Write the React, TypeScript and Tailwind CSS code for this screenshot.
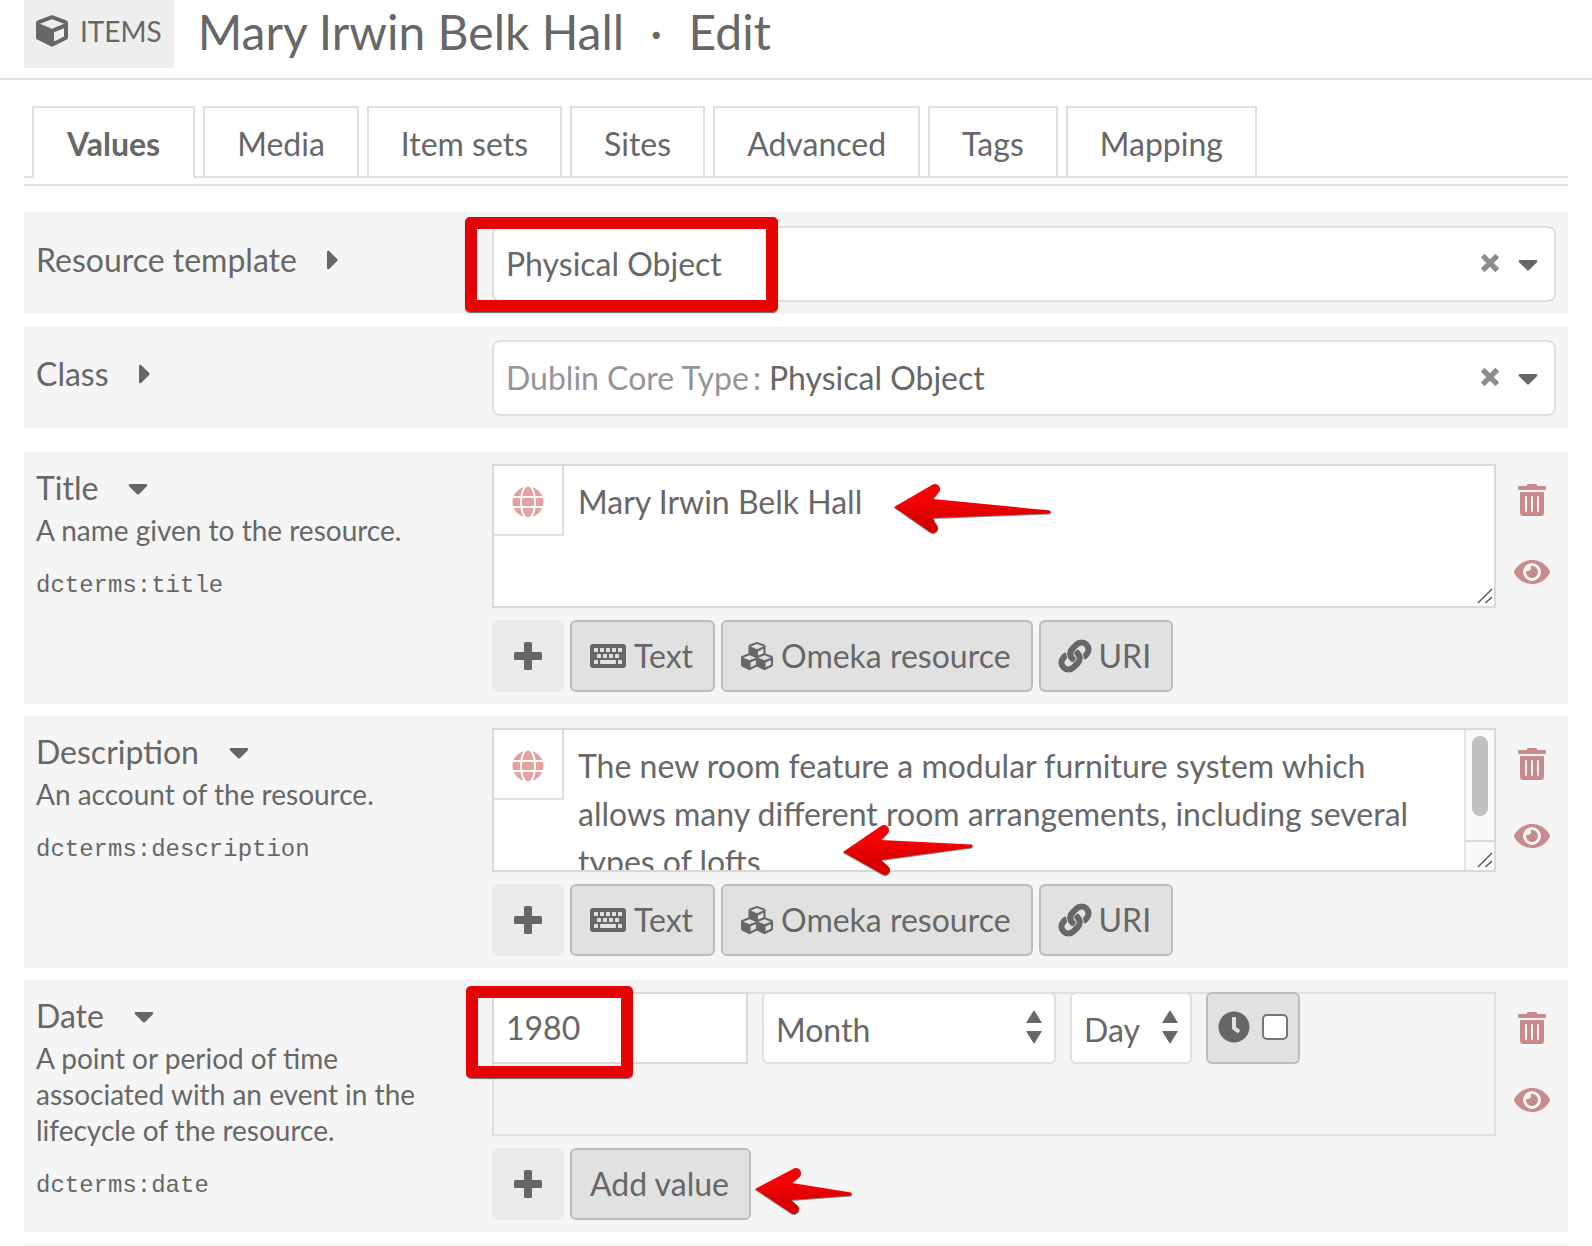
import React from "react";
import {
  FaCaretDown,
  FaCaretRight,
  FaClock,
  FaCube,
  FaCubes,
  FaEye,
  FaGlobe,
  FaLink,
  FaTrashAlt,
} from "react-icons/fa";

const TABS = ["Values", "Media", "Item sets", "Sites", "Advanced", "Tags", "Mapping"];

function ClearIcon() {
  return (
    <svg viewBox="0 0 20 20" className="size-5" aria-hidden="true">
      <path d="M2.700 2.700 17.300 17.300M17.300 2.700 2.700 17.300" stroke="currentColor" strokeWidth="5.4" />
    </svg>
  );
}

function PlusIcon() {
  return (
    <svg viewBox="0 0 28 28" className="size-7" fill="currentColor" aria-hidden="true">
      <rect x="0" y="10" width="28" height="8" rx="1.5" />
      <rect x="10" y="0" width="8" height="28" rx="1.5" />
    </svg>
  );
}

function KeyboardIcon() {
  return (
    <svg viewBox="0 0 36 24" className="h-6 w-9" aria-hidden="true">
      <rect width="36" height="24" rx="3" fill="currentColor" />
      <g fill="#e1e1e1">
        {[4, 10, 16, 22, 28].map((x) => (
          <rect key={x} x={x} y="4" width="4" height="4" rx="0.6" />
        ))}
        {[7, 13, 19, 25].map((x) => (
          <rect key={x} x={x} y="10" width="4" height="4" rx="0.6" />
        ))}
        <rect x="4" y="16" width="4" height="4" rx="0.6" />
        <rect x="10" y="16" width="16" height="4" rx="0.6" />
        <rect x="28" y="16" width="4" height="4" rx="0.6" />
      </g>
    </svg>
  );
}

function ResizeGrip() {
  return (
    <svg viewBox="0 0 16 16" className="pointer-events-none absolute right-px bottom-0.5 size-4" aria-hidden="true">
      <path d="M1 15 15 1M8.500 15 15 9" stroke="#505050" strokeWidth="1.4" fill="none" />
    </svg>
  );
}

type Point = [number, number];

function Arrow({
  className,
  tip,
  upper,
  upperNotch,
  tail,
  lowerNotch,
  lower,
  id,
}: {
  className: string;
  tip: Point;
  upper: Point;
  upperNotch: Point;
  tail: Point;
  lowerNotch: Point;
  lower: Point;
  id: string;
}) {
  const [tx, ty] = tip;
  const d =
    `M${tx} ${ty}L${upper[0] - 3} ${upper[1] - 4}` +
    `A5 5 0 0 1 ${upper[0] + 3} ${upper[1] + 4}` +
    `L${upperNotch[0]} ${upperNotch[1]}L${tail[0]} ${tail[1] - 1.5}Q${tail[0] + 1.5} ${tail[1]} ${tail[0]} ${tail[1] + 1.5}` +
    `L${lowerNotch[0]} ${lowerNotch[1]}L${lower[0] + 3} ${lower[1] - 4}` +
    `A5 5 0 0 1 ${lower[0] - 3} ${lower[1] + 4}Z`;
  return (
    <svg viewBox="0 0 170 60" className={`pointer-events-none absolute h-[60px] w-[170px] ${className}`} aria-hidden="true">
      <defs>
        <linearGradient id={id} x1="0" y1="0" x2="0" y2="1">
          <stop offset="0.35" stopColor="#f20404" />
          <stop offset="0.7" stopColor="#da0000" />
        </linearGradient>
      </defs>
      <path d={d} transform="translate(0 1)" fill="#555" fillOpacity="0.7" />
      <path d={d} fill={`url(#${id})`} />
    </svg>
  );
}

function Highlight({ className }: { className: string }) {
  return (
    <div
      className={`pointer-events-none absolute rounded-[5px] border-12 border-[#e60303] shadow-[0_1px_1px_#666] ${className}`}
    />
  );
}

function SelectField({
  id,
  label,
  prefix,
  value,
  children,
}: {
  id: string;
  label: string;
  prefix?: string;
  value: string;
  children?: React.ReactNode;
}) {
  return (
    <div className="flex bg-[#f5f5f5] pt-3.5 pr-3 pb-3">
      <div className="flex w-[468px] shrink-0 items-start pt-2.5 pl-3">
        <label htmlFor={id}>{label}</label>
        <button type="button" aria-label={`Expand ${label}`} className="ml-[30px] flex h-12 items-center">
          <FaCaretRight className="h-8 w-3" />
        </button>
      </div>
      <div className="relative flex h-[76px] grow items-center rounded-lg border-2 border-[#dfdfdf] bg-white pr-4 pl-3">
        {prefix && (
          <span className="mr-2 flex gap-1 text-[#959595]">
            <span>{prefix}</span>
            <span>:</span>
          </span>
        )}
        <select id={id} className="min-w-0 grow appearance-none outline-none" defaultValue={value}>
          <option>{value}</option>
        </select>
        <button type="button" aria-label={`Clear ${label}`} className="mr-[18px] mb-0.5 text-[#8d8d8d]">
          <ClearIcon />
        </button>
        <FaCaretDown className="h-8 w-5" />
        {children}
      </div>
    </div>
  );
}

function PropertyField({
  id,
  label,
  description,
  term,
  actions,
  children,
}: {
  id: string;
  label: string;
  description: string;
  term: string;
  actions: React.ReactNode;
  children: React.ReactNode;
}) {
  return (
    <section className="flex bg-[#f5f5f5] py-3">
      <div className="w-[468px] shrink-0 pr-12 pl-3">
        <div className="flex items-center">
          <label htmlFor={id}>{label}</label>
          <button type="button" aria-label={`Collapse ${label}`} className="ml-[30px] flex h-12 items-center">
            <FaCaretDown className="h-8 w-5" />
          </button>
        </div>
        <p className="text-[28px] leading-9">{description}</p>
        <p className="mt-5 font-['Liberation_Mono',monospace] text-2xl leading-9">{term}</p>
      </div>
      <div className="min-w-0 grow">
        <div className="flex">
          <div className="relative min-w-0 grow">{children}</div>
          <div className="flex w-[72px] shrink-0 flex-col text-[#c88a8a]">
            <button type="button" aria-label="Remove value" className="flex h-[72px] items-center justify-center">
              <FaTrashAlt className="h-8 w-7" />
            </button>
            <button type="button" aria-label="Make private" className="flex h-[72px] items-center justify-center">
              <FaEye className="h-8 w-9" />
            </button>
          </div>
        </div>
        <div className="relative mt-3 flex gap-1.5">
          <span className="flex size-[72px] items-center justify-center rounded-md bg-[#ebebeb]">
            <PlusIcon />
          </span>
          {actions}
        </div>
      </div>
    </section>
  );
}

function ActionButton({ children }: { children: React.ReactNode }) {
  return (
    <button
      type="button"
      className="flex h-[72px] items-center gap-2 rounded-md border-2 border-[#bdbdbd] bg-[#e1e1e1] pr-5 pl-[18px]"
    >
      {children}
    </button>
  );
}

function ValueTypes() {
  return (
    <>
      <ActionButton>
        <KeyboardIcon />
        Text
      </ActionButton>
      <ActionButton>
        <FaCubes className="size-8" />
        Omeka resource
      </ActionButton>
      <ActionButton>
        <FaLink className="size-8 overflow-visible" stroke="currentColor" strokeWidth={18} />
        URI
      </ActionButton>
    </>
  );
}

function LiteralValue({
  id,
  value,
  scroll,
  children,
}: {
  id: string;
  value: string;
  scroll?: boolean;
  children: React.ReactNode;
}) {
  return (
    <div className="relative flex h-36 border-2 border-[#d9d9d9] bg-white">
      <button
        type="button"
        aria-label="Set language"
        className="flex h-[70px] w-[70px] shrink-0 items-center justify-center border-r-2 border-b-2 border-[#dfdfdf] pt-1 text-[#e5a0a0]"
      >
        <FaGlobe className="size-8" />
      </button>
      <textarea
        id={id}
        defaultValue={value}
        className="h-full min-w-0 grow resize-none overflow-hidden px-3.5 pt-3 leading-12 outline-none"
      />
      {scroll && (
        <div className="flex w-[30px] shrink-0 flex-col border-l-2 border-[#e4e4e4] bg-[#fafafa]">
          <div className="grow px-1.5 pt-1.5">
            <div className="h-20 w-4 rounded-full bg-[#c1c1c1]" />
          </div>
          <div className="h-[30px] border-t-2 border-[#d9d9d9]" />
        </div>
      )}
      <ResizeGrip />
      {children}
    </div>
  );
}

function Stepper() {
  return (
    <svg viewBox="0 0 16 34" className="pointer-events-none absolute top-4 right-3 h-[34px] w-4" aria-hidden="true">
      <path d="M8 0 16 13H0ZM8 34 0 21H16Z" fill="currentColor" />
    </svg>
  );
}

function DateSelect({ label, className }: { label: string; className: string }) {
  return (
    <div className={`relative h-[72px] rounded-md border-2 border-[#dfdfdf] bg-white ${className}`}>
      <select aria-label={label} className="size-full appearance-none pt-1 pl-3 outline-none">
        <option>{label}</option>
      </select>
      <Stepper />
    </div>
  );
}

export default function App() {
  return (
    <div className="overflow-x-hidden bg-white font-['Lato',sans-serif] text-[32px] leading-12 text-[#676767]">
      <header className="flex h-20 items-start border-b-2 border-[#dfdfdf] px-6">
        <div className="flex h-[68px] items-center gap-3 bg-[#eeeeee] px-3 pb-1.5 text-[28px]">
          <FaCube className="size-8" />
          ITEMS
        </div>
        <h1 className="ml-6 flex text-5xl leading-16">
          <span>Mary Irwin Belk Hall</span>
          <span className="mx-[26px]">·</span>
          <span>Edit</span>
        </h1>
      </header>

      <main className="px-6 pt-[26px]">
        <nav className="flex gap-2 border-b-2 border-[#dfdfdf] pl-2">
          {TABS.map((tab, i) => (
            <a
              key={tab}
              href={`#${tab.toLowerCase().replace(" ", "-")}`}
              className={
                i === 0
                  ? "-mb-0.5 flex h-[72px] items-center border-2 border-b-0 border-[#dfdfdf] bg-white px-[33px] pt-0.5 font-bold"
                  : "flex h-[70px] items-center border-2 border-b-0 border-[#dfdfdf] bg-white px-8 pt-1"
              }
            >
              {tab}
            </a>
          ))}
        </nav>
        <div className="mt-1.5 border-t-2 border-[#dfdfdf]" />

        <form className="mt-[26px]">
          <div className="flex flex-col gap-3">
            <SelectField id="template" label="Resource template" value="Physical Object">
              <Highlight className="-top-[11px] -left-[29px] h-[95px] w-[313px]" />
            </SelectField>
            <SelectField id="class" label="Class" prefix="Dublin Core Type" value="Physical Object" />
          </div>

          <div className="mt-6 flex flex-col gap-3">
            <PropertyField
              id="title"
              label="Title"
              description="A name given to the resource."
              term="dcterms:title"
              actions={<ValueTypes />}
            >
              <LiteralValue id="title" value="Mary Irwin Belk Hall">
                <Arrow
                  id="arrow-title"
                  className="top-2.5 left-[396px]"
                  tip={[4, 31]}
                  upper={[45, 13]}
                  upperNotch={[43, 23]}
                  tail={[160, 36]}
                  lowerNotch={[43, 42]}
                  lower={[43, 52]}
                />
              </LiteralValue>
            </PropertyField>

            <PropertyField
              id="description"
              label="Description"
              description="An account of the resource."
              term="dcterms:description"
              actions={<ValueTypes />}
            >
              <LiteralValue
                id="description"
                scroll
                value="The new room feature a modular furniture system which allows many different room arrangements, including several types of lofts."
              >
                <Arrow
                  id="arrow-description"
                  className="top-[87px] left-[345px]"
                  tip={[4, 35]}
                  upper={[45, 13]}
                  upperNotch={[42, 23]}
                  tail={[133, 29]}
                  lowerNotch={[42, 43]}
                  lower={[46, 53]}
                />
              </LiteralValue>
            </PropertyField>

            <PropertyField
              id="date"
              label="Date"
              description="A point or period of time associated with an event in the lifecycle of the resource."
              term="dcterms:date"
              actions={
                <>
                  <ActionButton>Add value</ActionButton>
                  <Arrow
                    id="arrow-date"
                    className="top-2.5 left-[259px]"
                    tip={[4, 31]}
                    upper={[45, 15]}
                    upperNotch={[41, 25]}
                    tail={[100, 36]}
                    lowerNotch={[40, 42]}
                    lower={[43, 51]}
                  />
                </>
              }
            >
              <div className="h-36 border-2 border-[#dfdfdf]">
                <div className="-mt-0.5 -ml-0.5 flex gap-3.5">
                  <input
                    id="date"
                    type="text"
                    defaultValue="1980"
                    className="h-[72px] w-64 border-2 border-[#d9d9d9] bg-white px-3 pb-0.5 outline-none"
                  />
                  <DateSelect label="Month" className="w-[294px]" />
                  <DateSelect label="Day" className="w-[122px]" />
                  <label className="flex h-[72px] w-[94px] items-center justify-center gap-3 rounded-md border-2 border-[#bdbdbd] bg-[#e1e1e1] pb-0.5">
                    <FaClock className="size-8" />
                    <input
                      type="checkbox"
                      aria-label="Set time"
                      className="size-[26px] appearance-none rounded-[5px] border-2 border-[#767676] bg-white"
                    />
                  </label>
                </div>
              </div>
              <Highlight className="-top-1.5 -left-[26px] h-[92px] w-[167px]" />
            </PropertyField>

            <div className="h-0.5 bg-[#f5f5f5]" />
          </div>
        </form>
      </main>
    </div>
  );
}
